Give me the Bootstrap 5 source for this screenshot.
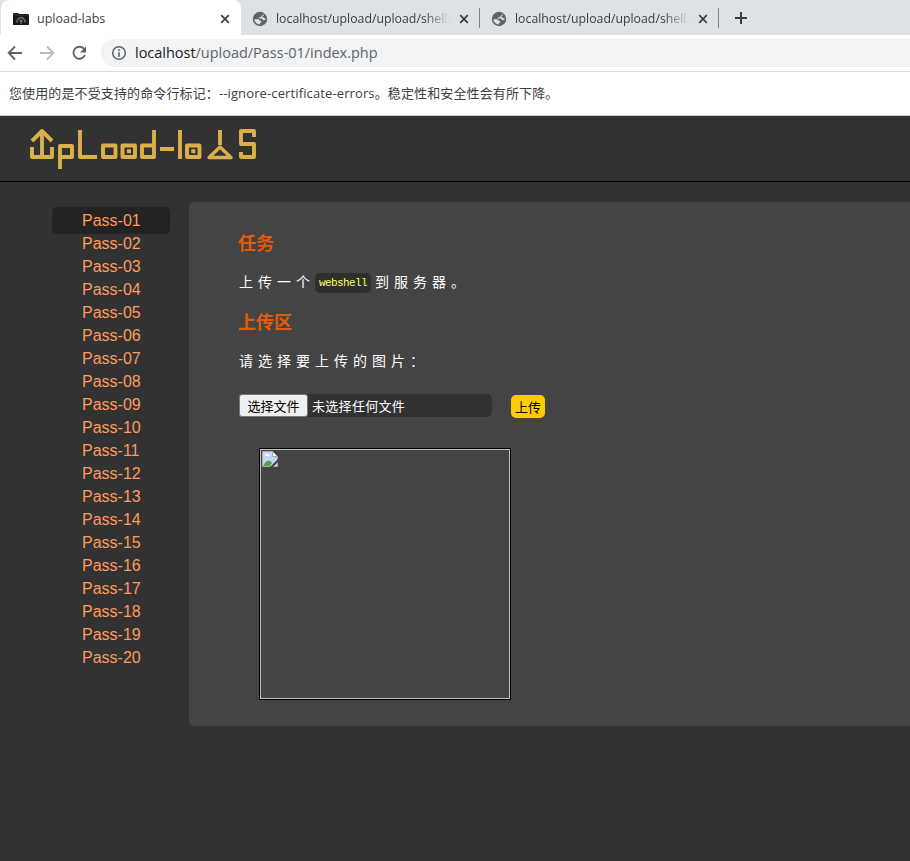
<!DOCTYPE html>
<html lang="zh-CN">
<head>
<meta charset="utf-8">
<title>upload-labs</title>
<link href="https://cdn.jsdelivr.net/npm/bootstrap@5.3.0/dist/css/bootstrap.min.css" rel="stylesheet">
<style>
body{width:910px;height:861px;overflow:hidden;background:#323232;font-family:"Liberation Sans","Noto Sans CJK SC",sans-serif}
svg{display:block;flex:none}
.chrome-ui{font-family:"Open Sans","Noto Sans CJK SC",sans-serif;background:#fff;color:#3c4043}
.tab-strip{height:35px;background:#dee1e6}
.tab-item{height:35px;font-size:12.5px;padding-top:2px}
.tab-current{width:240px;background:#fff;border-radius:8px 8px 0 0;margin-left:1px;padding-left:12px;padding-right:11px}
.tab-idle{width:238px;padding-left:11px;padding-right:10px}
.tab-rule{width:1px;height:20px;background:#808387;margin-top:8px}
.tab-name{white-space:nowrap;padding-top:2px}
.tab-url{width:175px;margin-left:8px;font-size:12.3px;-webkit-mask-image:linear-gradient(90deg,#000 85%,rgba(0,0,0,.1) 98%)}
.toolbar{height:37px;border-bottom:1px solid #dadce0}
.address{height:28px;background:#f1f3f4;border-radius:14px 0 0 14px;font-size:14.5px;letter-spacing:-.02px;color:#5f6368;padding-left:10px}
.address span{white-space:nowrap}
.address b{color:#202124}
.notice{height:43px;font-size:13px;letter-spacing:.12px;padding-left:9px;white-space:nowrap}
.site-head{height:67px;background:#323232;border-top:1px solid #c9d2d2;border-bottom:1px solid #000}
.menu{width:118px;margin:25px 0 0 52px}
.menu a{display:block;height:23px;line-height:23px;padding-left:30px;color:#ff9b5c;font-size:16px;text-decoration:none}
.menu a.chosen{background:#232323;border-radius:5px;height:27px;line-height:27px}
.menu a.chosen + a{margin-top:-2px}
.panel{background:#444;height:524px;margin:20px 0 0 19px;padding:29px 0 0 50px;border-radius:5px 0 0 5px;color:#fff}
.panel h3{font:bold 18px/22px "Noto Sans CJK SC",sans-serif;color:#e35b09;margin:0 0 0 -1px}
.panel p{font:14px/20px "Noto Sans CJK SC",sans-serif;letter-spacing:5px;white-space:nowrap}
.panel .first-line{margin:18px 0 19px}
.panel .second-line{margin:18px 0 24px}
.panel code{display:inline-block;width:56px;height:20px;margin-top:2px;margin-bottom:-2px;background:#2f2f2f;border-radius:5px;color:#ffff66;font:11px/21px "Liberation Mono",monospace;letter-spacing:-.6px;text-align:center;vertical-align:top}
.picker{width:253px;height:23px;background:#323232;border-radius:5px;font:13px/24px "Noto Sans CJK SC",sans-serif}
.picker span{letter-spacing:.3px}
.pick-btn{width:69px;height:23px;line-height:22px;background:#efefef;border:1px solid #767676;border-radius:3px;color:#000;text-align:center}
.send{width:34px;height:23px;margin-left:19px;margin-top:1px;padding:0;border:0;border-radius:5px;background:#ffcc00;color:#000;font:13px/22px "Noto Sans CJK SC",sans-serif}
.preview{width:252px;height:252px;border:1px solid #000;margin:30px 0 0 20px}
.preview div{height:250px;border:1px solid #c0c0c0;padding:1px}
</style>
<script src="https://cdn.jsdelivr.net/npm/bootstrap@5.3.0/dist/js/bootstrap.bundle.min.js"></script>
</head>
<body>
<svg width="0" height="0" class="position-absolute"><defs>
<symbol id="cross" viewBox="0 0 10 10"><path d="M1.2 1.2 8.8 8.8M8.8 1.2 1.2 8.8" stroke="#3c4043" stroke-width="1.7"/></symbol>
<symbol id="globe" viewBox="0 0 16 16"><circle cx="8" cy="8" r="7.200" fill="#5f6368"/><path d="M2.300 8.200h3.900q1.500.2 1.600 1.500 1.700 0 1.800 1.300-.2.600-1.300.7-.5.300-.5 1.900Q3 13 2.300 8.200zM9.400 2.500 11.200 3.200Q10.900 4.700 9.200 4.900V6.300H6.900L6.600 7.400H9.600Q10.700 7.600 10.900 9.100 12.300 9.300 13.600 8.600L13.700 7.200Q12.300 7.800 11.700 6.600 11.200 6.100 10.200 6.100 10.100 5.500 11.400 4.700L11.900 3.700 9.400 2.500z" fill="#dee1e6"/></symbol>
</defs></svg>
<div class="chrome-ui">
 <div class="tab-strip d-flex">
  <div class="tab-item tab-current d-flex align-items-center">
   <svg width="16" height="14" viewBox="0 0 16 14"><path d="M0 2Q0 1 1 1h4l1 1h9q1 0 1 1v9q0 1-1 1H1q-1 0-1-1z" fill="#20282b"/><path d="M0 4h16v8q0 1-1 1H1q-1 0-1-1z" fill="#14191b"/><path d="M4.500 10.500Q3 9.500 4.500 8 5.500 5.500 8 5.500T11.500 8q1.500 1.500 0 2.500M8 12V8M6.500 9.500 8 8l1.500 1.500" fill="none" stroke="#687176" stroke-width="1.300"/></svg>
   <span class="tab-name ms-2">upload-labs</span><svg class="ms-auto" width="10" height="10"><use href="#cross"/></svg>
  </div>
  <div class="tab-item tab-idle d-flex align-items-center"><svg width="16" height="16"><use href="#globe"/></svg><span class="tab-name tab-url">localhost/upload/upload/shell.</span><svg class="ms-auto" width="10" height="10"><use href="#cross"/></svg></div>
  <div class="tab-rule"></div>
  <div class="tab-item tab-idle d-flex align-items-center"><svg width="16" height="16"><use href="#globe"/></svg><span class="tab-name tab-url">localhost/upload/upload/shell.</span><svg class="ms-auto" width="10" height="10"><use href="#cross"/></svg></div>
  <div class="tab-rule"></div>
  <svg class="ms-3" width="12" height="35" viewBox="0 0 12 35"><path d="M6 12v12M0 18h12" stroke="#3c4043" stroke-width="2"/></svg>
 </div>
 <div class="toolbar d-flex align-items-center">
  <svg width="101" height="36" viewBox="0 0 101 36" fill="none" stroke="#5f6368" stroke-width="1.900"><path d="M22 18H9M15 11.500 8.700 18l6.300 6.500"/><path d="M40 18h13M47 11.500l6.300 6.500-6.300 6.500" stroke="#babcbe"/><path d="M84.500 14.500A6 6 0 1 0 85 20"/><path d="M86 11.500v6h-6z" fill="#5f6368" stroke="none"/></svg>
  <div class="address flex-grow-1 d-flex align-items-center"><svg width="16" height="16" viewBox="0 0 16 16"><circle cx="8" cy="8" r="6.300" fill="none" stroke="#5f6368" stroke-width="1.500"/><path d="M8 4.200v1.700M8 7.200v4.500" stroke="#5f6368" stroke-width="1.700"/></svg><span class="ms-2"><b class="fw-normal">localhost</b>/upload/Pass-01/index.php</span></div>
 </div>
 <div class="notice d-flex align-items-center">您使用的是不受支持的命令行标记：--ignore-certificate-errors。稳定性和安全性会有所下降。</div>
</div>
<header class="site-head">
 <svg width="290" height="64" viewBox="0 116 290 64" role="img" aria-label="upload-labs" fill="none" stroke="#dbb04a" stroke-width="3.900" stroke-linejoin="round">
  <path d="M42 132v25M32 141l10-10 10 10M32 147v10h20v-10M60 169v-23h12v11H60M80 130v27h17M103 145.500h12.500v11.500H103zM122.500 145.500h12.500v11.500h-12.500zM154 130v27h-12v-11.500h12M160 149h14M180 130v29M187 145.500h12.500v11.500H187zM220 130v15M254 137v-6h-13v13h13v13h-13v-5"/>
  <path d="M209 157.500 220 147l11 10.500z" stroke-width="3.400"/>
  <path d="M127 151.200h4M191.300 151.200h4"/>
 </svg>
</header>
<main class="d-flex align-items-start">
 <nav class="menu flex-shrink-0" aria-label="Pass">
  <a class="chosen" href="#">Pass-01</a><a href="#">Pass-02</a><a href="#">Pass-03</a><a href="#">Pass-04</a><a href="#">Pass-05</a><a href="#">Pass-06</a><a href="#">Pass-07</a><a href="#">Pass-08</a><a href="#">Pass-09</a><a href="#">Pass-10</a><a href="#">Pass-11</a><a href="#">Pass-12</a><a href="#">Pass-13</a><a href="#">Pass-14</a><a href="#">Pass-15</a><a href="#">Pass-16</a><a href="#">Pass-17</a><a href="#">Pass-18</a><a href="#">Pass-19</a><a href="#">Pass-20</a>
 </nav>
 <section class="panel flex-grow-1">
  <h3>任务</h3>
  <p class="first-line">上传一个<code>webshell</code><span class="ms-1">到服务器。</span></p>
  <h3>上传区</h3>
  <p class="second-line">请选择要上传的图片：</p>
  <div class="d-flex"><div class="picker d-flex"><div class="pick-btn">选择文件</div><span class="ms-1">未选择任何文件</span></div><button class="send" type="button">上传</button></div>
  <div class="preview"><div><svg width="16" height="16" viewBox="0 0 16 16"><path d="M.5.500h10l5 5v10H.5z" fill="#c3d7f7" stroke="#aaa"/><path d="M10.500.500v5h5z" fill="#fff" stroke="#aaa"/><path d="M3 5q0-2 2-2 2-1 3 2z" fill="#fff"/><path d="M1 15q5-9 9-3l-2 3z" fill="#51a938"/><path d="M8 16l8-8v3l-5 5z" fill="#444"/></svg></div></div>
 </section>
</main>
</body>
</html>
